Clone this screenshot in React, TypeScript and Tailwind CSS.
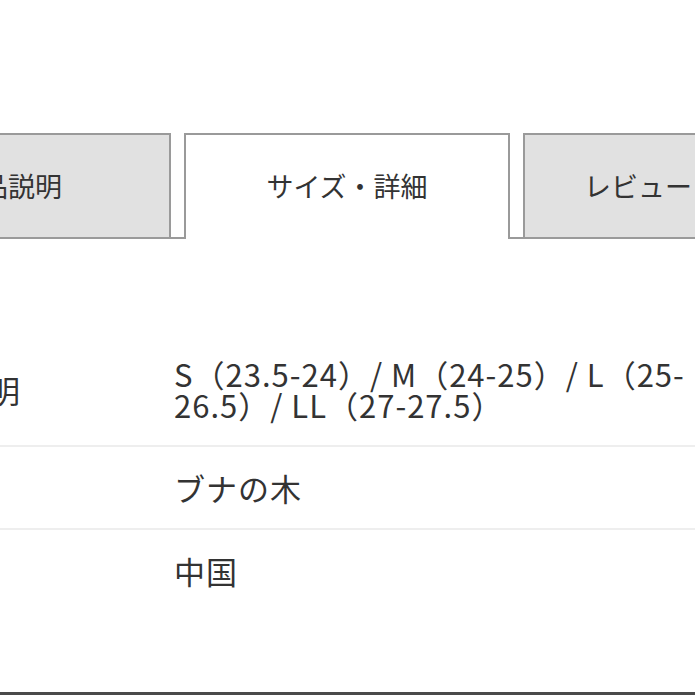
const tabs = [
  { label: "商品説明", active: false },
  { label: "サイズ・詳細", active: true },
  { label: "レビュー（1件）", active: false },
];

const specs = [
  { label: "サイズ説明", value: "S（23.5-24）/ M（24-25）/ L（25-\n26.5）/ LL（27-27.5）" },
  { label: "素材", value: "ブナの木" },
  { label: "原産国", value: "中国" },
];

export default function App() {
  return (
    <div
      className="relative w-[695px] h-[695px] overflow-hidden bg-white text-[#333]"
      style={{ fontFamily: '"Noto Sans CJK JP", "Noto Sans", sans-serif' }}
    >
      <div className="ml-[-155px] w-[1100px] pt-[133px]">
        {/* tabs */}
        <div className="flex items-end gap-[13px] border-b-2 border-[#9a9a9a]">
          {tabs.map((t) => (
            <div
              key={t.label}
              className={
                t.active
                  ? "flex w-[326px] h-[106px] -mb-[2px] items-center justify-center border-2 border-b-0 border-[#9a9a9a] bg-white pb-[2px] text-[27px]"
                  : "flex w-[326px] h-[104px] items-center justify-center border-2 border-b-0 border-[#9a9a9a] bg-[#e1e1e1] text-[27px]"
              }
            >
              {t.label}
            </div>
          ))}
        </div>

        {/* spec table */}
        <div className="mt-[94px] w-[1100px]">
          {specs.map((s, i) => (
            <div
              key={s.label}
              className={
                i < specs.length - 1
                  ? "flex items-center border-b-2 border-[#eeeeee] py-[25px]"
                  : "flex items-center py-[25px]"
              }
            >
              <div className="w-[329px] shrink-0 pl-[21px] text-[31px] leading-[31px]">{s.label}</div>
              <div className="w-[700px] whitespace-pre-line text-[31px] leading-[31px] tracking-[1px]">
                {s.value}
              </div>
            </div>
          ))}
        </div>
      </div>

      {/* bottom rule, overlaying the page edge */}
      <div className="absolute bottom-0 left-0 h-[3px] w-full bg-[#4a4a4a]" />
    </div>
  );
}
